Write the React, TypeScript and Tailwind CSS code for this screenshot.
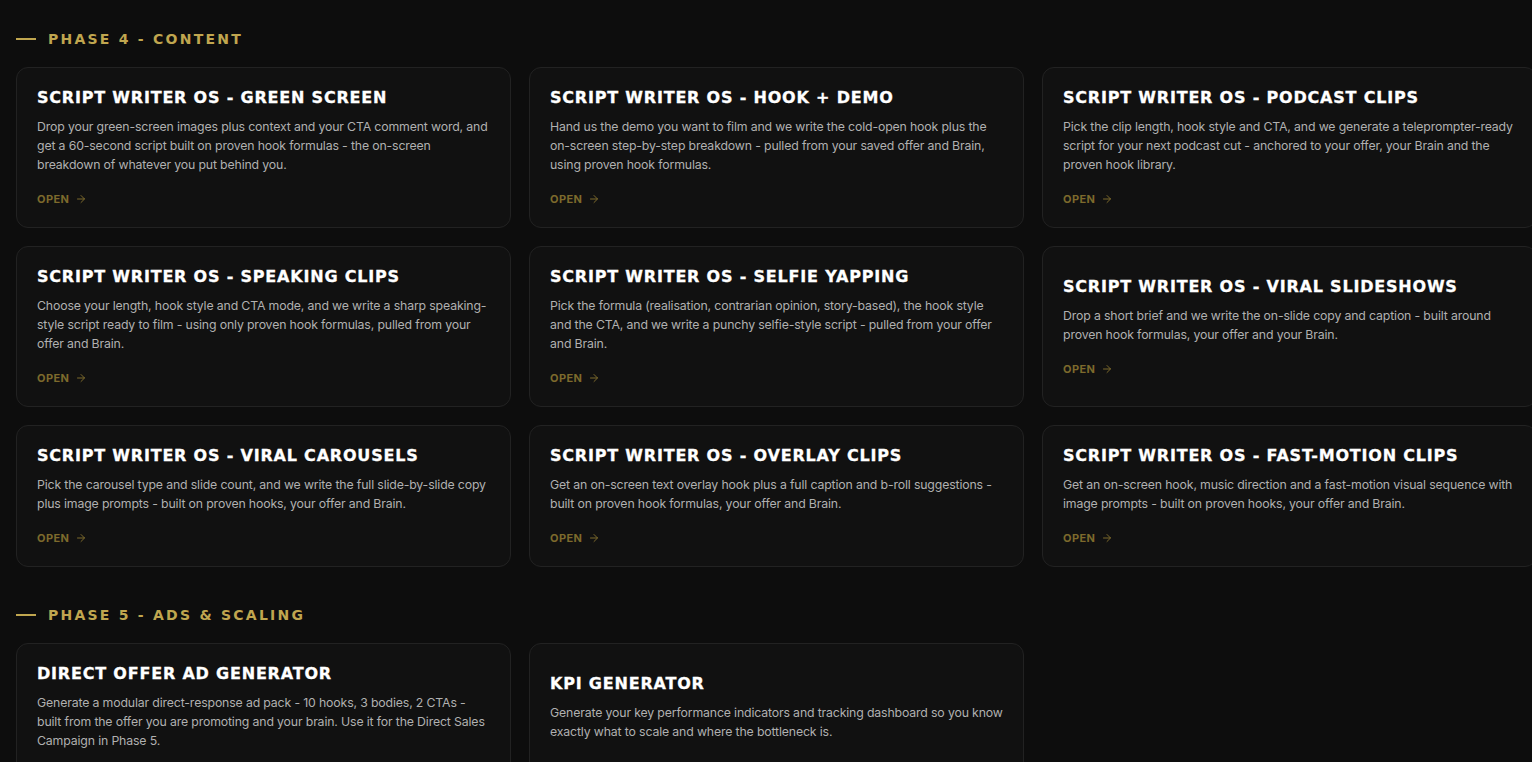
import React from 'react';
import { ArrowRight } from 'lucide-react';

interface Tool {
  title: string;
  body: string;
}

const phase4: Tool[] = [
  {
    title: 'SCRIPT WRITER OS - GREEN SCREEN',
    body: 'Drop your green-screen images plus context and your CTA comment word, and get a 60-second script built on proven hook formulas - the on-screen breakdown of whatever you put behind you.',
  },
  {
    title: 'SCRIPT WRITER OS - HOOK + DEMO',
    body: 'Hand us the demo you want to film and we write the cold-open hook plus the on-screen step-by-step breakdown - pulled from your saved offer and Brain, using proven hook formulas.',
  },
  {
    title: 'SCRIPT WRITER OS - PODCAST CLIPS',
    body: 'Pick the clip length, hook style and CTA, and we generate a teleprompter-ready script for your next podcast cut - anchored to your offer, your Brain and the proven hook library.',
  },
  {
    title: 'SCRIPT WRITER OS - SPEAKING CLIPS',
    body: 'Choose your length, hook style and CTA mode, and we write a sharp speaking-style script ready to film - using only proven hook formulas, pulled from your offer and Brain.',
  },
  {
    title: 'SCRIPT WRITER OS - SELFIE YAPPING',
    body: 'Pick the formula (realisation, contrarian opinion, story-based), the hook style and the CTA, and we write a punchy selfie-style script - pulled from your offer and Brain.',
  },
  {
    title: 'SCRIPT WRITER OS - VIRAL SLIDESHOWS',
    body: 'Drop a short brief and we write the on-slide copy and caption - built around proven hook formulas, your offer and your Brain.',
  },
  {
    title: 'SCRIPT WRITER OS - VIRAL CAROUSELS',
    body: 'Pick the carousel type and slide count, and we write the full slide-by-slide copy plus image prompts - built on proven hooks, your offer and Brain.',
  },
  {
    title: 'SCRIPT WRITER OS - OVERLAY CLIPS',
    body: 'Get an on-screen text overlay hook plus a full caption and b-roll suggestions - built on proven hook formulas, your offer and Brain.',
  },
  {
    title: 'SCRIPT WRITER OS - FAST-MOTION CLIPS',
    body: 'Get an on-screen hook, music direction and a fast-motion visual sequence with image prompts - built on proven hooks, your offer and Brain.',
  },
];

const phase5: Tool[] = [
  {
    title: 'DIRECT OFFER AD GENERATOR',
    body: 'Generate a modular direct-response ad pack - 10 hooks, 3 bodies, 2 CTAs - built from the offer you are promoting and your brain. Use it for the Direct Sales Campaign in Phase 5.',
  },
  {
    title: 'KPI GENERATOR',
    body: 'Generate your key performance indicators and tracking dashboard so you know exactly what to scale and where the bottleneck is.',
  },
];

const PhaseHeader = ({ label, className }: { label: string; className?: string }) => (
  <div className={`flex items-center gap-3 ${className ?? ''}`}>
    <span className="h-[2px] w-5 bg-[#c0a64f]" />
    <h2 className="font-['DejaVu_Sans',sans-serif] text-[14px] font-bold leading-4 tracking-[0.16em] text-[#c0a64f]">
      {label}
    </h2>
  </div>
);

const ToolCard = ({ tool }: { tool: Tool }) => (
  <div className="flex flex-col justify-center rounded-xl border border-[#222222] bg-[#111111] px-5 py-[21px]">
    <h3 className="font-['DejaVu_Sans',sans-serif] text-[16px] font-bold leading-[18px] tracking-[0.05em] text-white [-webkit-text-stroke:0.3px_white]">
      {tool.title}
    </h3>
    <p className="mt-2.5 font-['Inter',sans-serif] text-[12.3px] leading-[19px] tracking-[-0.012em] text-[#b0b0b0]">
      {tool.body}
    </p>
    <a className="mt-[18px] flex items-center gap-1.5 font-['Inter',sans-serif] text-[11px] font-bold leading-[14px] tracking-[0.04em] text-[#7d6a2c]">
      OPEN
      <ArrowRight className="h-3 w-3" strokeWidth={2} />
    </a>
  </div>
);

export default function App() {
  return (
    <div className="h-[762px] w-[1532px] overflow-hidden bg-[#0d0d0d] pl-4 pt-[31px]">
      <PhaseHeader label="PHASE 4 - CONTENT" className="mb-5" />
      <div className="grid w-[1521px] grid-cols-[repeat(3,495px)] gap-[18px]">
        {phase4.map((t) => (
          <ToolCard key={t.title} tool={t} />
        ))}
      </div>

      <PhaseHeader label="PHASE 5 - ADS & SCALING" className="mb-5 mt-10" />
      <div className="grid w-[1521px] grid-cols-[repeat(3,495px)] gap-[18px]">
        {phase5.map((t) => (
          <ToolCard key={t.title} tool={t} />
        ))}
      </div>
    </div>
  );
}
